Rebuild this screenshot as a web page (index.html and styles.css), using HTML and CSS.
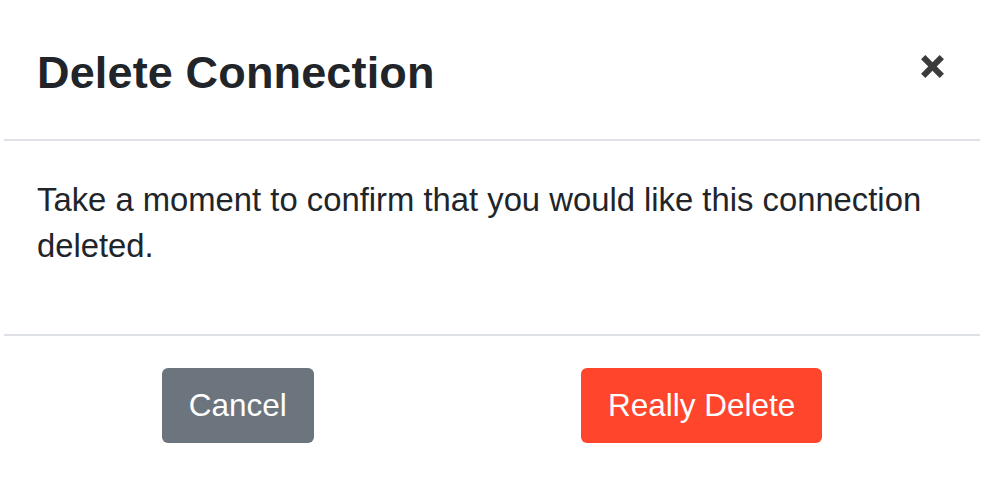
FILE: index.html
```html
<!DOCTYPE html>
<html lang="en">
<head>
<meta charset="utf-8">
<title>Delete Connection</title>
<link rel="stylesheet" href="styles.css">
</head>
<body>
<div class="modal">
  <div class="modal-header">
    <h5 class="modal-title">Delete Connection</h5>
    <button class="close" type="button" aria-label="Close">
      <svg width="23" height="23" viewBox="0 0 23 23" aria-hidden="true">
        <line x1="2.2" y1="2.2" x2="20.8" y2="20.8" />
        <line x1="20.8" y1="2.2" x2="2.2" y2="20.8" />
      </svg>
    </button>
  </div>
  <div class="modal-body">
    <p class="message">Take a moment to confirm that you would like this connection deleted.</p>
  </div>
  <div class="modal-footer">
    <button class="btn btn-secondary" type="button">Cancel</button>
    <button class="btn btn-danger" type="button">Really Delete</button>
  </div>
</div>
</body>
</html>
```

FILE: styles.css
```css
html, body {
  margin: 0;
  padding: 0;
  background: #ffffff;
}

body {
  font-family: "Liberation Sans", Arial, sans-serif;
  color: #212529;
}

.modal {
  margin: 0 4px;
}

.modal-header {
  display: flex;
  justify-content: space-between;
  align-items: flex-start;
  padding: 46px 36px 40px 33px;
  border-bottom: 2px solid #dee2e6;
}

.modal-title {
  margin: 0;
  font-size: 45px;
  line-height: 53px;
  font-weight: 700;
  color: #212529;
  letter-spacing: 0.15px;
}

.close {
  margin: 9px 0 0 0;
  padding: 0;
  border: 0;
  background: transparent;
  display: block;
  line-height: 0;
  cursor: pointer;
}

.close svg line {
  stroke: #3b3b3b;
  stroke-width: 6;
  stroke-linecap: butt;
}

.modal-body {
  padding: 36px 32px 65px 33px;
  border-bottom: 2px solid #dee2e6;
}

.message {
  margin: 0;
  font-size: 32.8px;
  line-height: 46px;
}

.modal-footer {
  display: flex;
  justify-content: space-around;
  align-items: center;
  padding: 32px 24px 40px 24px;
}

.btn {
  font-family: "Liberation Sans", Arial, sans-serif;
  font-size: 31.5px;
  line-height: 47px;
  padding: 14px 27px;
  border: 0;
  border-radius: 6px;
  color: #ffffff;
  cursor: pointer;
}

.btn-secondary {
  background: #6c757d;
}

.btn-danger {
  background: #ff452c;
}
```
